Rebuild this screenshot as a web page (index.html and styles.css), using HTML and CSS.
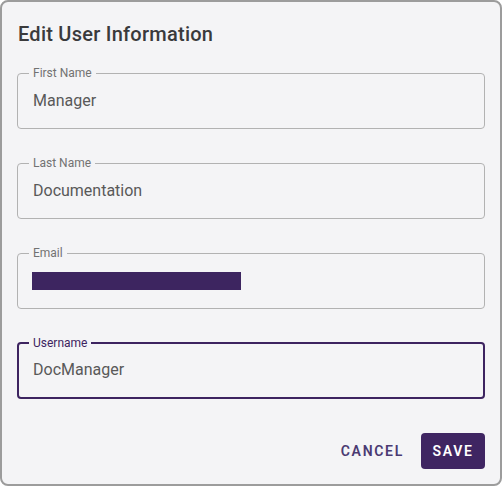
FILE: index.html
```html
<!DOCTYPE html>
<html>
<head>
<meta charset="utf-8">
<link rel="stylesheet" href="styles.css">
</head>
<body>
<div class="dialog">
  <h2 class="title">Edit User Information</h2>
  <div class="fields">
    <fieldset class="field">
      <legend>First Name</legend>
      <div class="value">Manager</div>
    </fieldset>
    <fieldset class="field">
      <legend>Last Name</legend>
      <div class="value">Documentation</div>
    </fieldset>
    <fieldset class="field">
      <legend>Email</legend>
      <div class="value"><span class="redacted"></span></div>
    </fieldset>
    <fieldset class="field focused">
      <legend>Username</legend>
      <div class="value">DocManager</div>
    </fieldset>
  </div>
  <div class="actions">
    <button class="btn text">Cancel</button>
    <button class="btn filled">Save</button>
  </div>
</div>
</body>
</html>
```
FILE: styles.css
```css
html, body {
  margin: 0;
  padding: 0;
  background: #ffffff;
}
body {
  font-family: Roboto, "Liberation Sans", sans-serif;
}
.dialog {
  width: 502px;
  height: 486px;
  box-sizing: border-box;
  border: 2px solid #9c9c9c;
  border-radius: 8px;
  background: #f4f4f6;
  display: flex;
  flex-direction: column;
}
.title {
  margin: 0;
  padding: 16px 16px 0 16px;
  font-size: 20px;
  line-height: 32px;
  font-weight: 500;
  letter-spacing: 0.25px;
  color: #3a3a3c;
}
.fields {
  display: flex;
  flex-direction: column;
  gap: 27px;
  padding: 16px 15px 0 15px;
}
.field {
  margin: 0;
  height: 63px;
  box-sizing: border-box;
  padding: 0 11px;
  border: 1px solid #b2b2b2;
  border-radius: 4px;
}
.field legend {
  padding: 0 4px;
  font-size: 12px;
  line-height: 14px;
  color: #727272;
}
.value {
  padding: 9px 4px 0 4px;
  font-size: 16px;
  line-height: 24px;
  color: #595959;
  height: 24px;
}
.redacted {
  display: block;
  width: 209px;
  height: 18px;
  margin-top: 3px;
  margin-left: -1px;
  background: #3d2560;
}
.field.focused {
  border: 2px solid #3d2460;
  padding: 0 10px;
}
.field.focused legend {
  color: #3d2460;
}
.field.focused .value {
  padding-top: 8px;
}
.actions {
  margin-top: auto;
  display: flex;
  justify-content: flex-end;
  align-items: center;
  gap: 8px;
  padding: 0 15px 15px 0;
}
.btn {
  font-family: Roboto, "Liberation Sans", sans-serif;
  font-size: 14px;
  font-weight: 600;
  letter-spacing: 1.7px;
  text-transform: uppercase;
  border: none;
  border-radius: 4px;
  height: 36px;
  cursor: pointer;
}
.btn.text {
  background: transparent;
  color: #4a3a72;
  padding: 0 9px;
}
.btn.filled {
  background: #3f2562;
  color: #ffffff;
  padding: 0;
  width: 64px;
}
```
